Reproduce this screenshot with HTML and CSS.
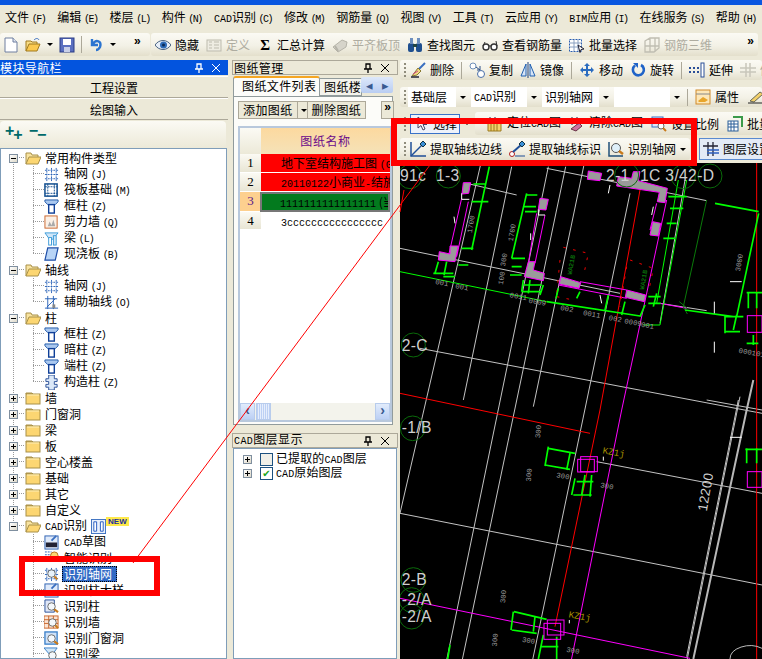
FILE: index.html
```html
<!DOCTYPE html>
<html lang="zh">
<head>
<meta charset="utf-8">
<title>CAD识别</title>
<link rel="stylesheet" href="styles.css">
</head>
<body>
<svg class="defs" aria-hidden="true">
<symbol id="new" viewBox="0 0 16 16"><path d="M2 1h8l4 4v10H2z" fill="#fff" stroke="#6f7f9f"/><path d="M10 1v4h4" fill="#dfe6f2" stroke="#6f7f9f"/></symbol>
<symbol id="open" viewBox="0 0 16 16"><path d="M1 14V4h5l1 1h5v2" fill="#f8dc84" stroke="#a07a20"/><path d="M1 14l3-7h11l-3 7z" fill="#fbc94f" stroke="#a07a20"/><path d="M9 3c2-2 4-2 5 0" fill="none" stroke="#3a6fc0"/></symbol>
<symbol id="save" viewBox="0 0 16 16"><rect x="1" y="1" width="14" height="14" fill="#5a6fc0" stroke="#2b3d85"/><rect x="4" y="2" width="8" height="6" fill="#fff"/><rect x="5" y="10" width="6" height="5" fill="#c8cfe8"/></symbol>
<symbol id="undo" viewBox="0 0 16 16"><path d="M4 2v6h6M5 7c3-5 9-3 7 3-1 2-3 3-4 3" fill="none" stroke="#2b74d0" stroke-width="2.4"/></symbol>
<symbol id="eye" viewBox="0 0 16 16"><path d="M0 8c4-6 12-6 16 0-4 6-12 6-16 0z" fill="#e6eef8" stroke="#47607f"/><circle cx="8.500" cy="8" r="3.500" fill="#2d6bb8"/><circle cx="8.500" cy="8" r="1.500" fill="#0b2a55"/></symbol>
<symbol id="def" viewBox="0 0 16 16"><rect x="1" y="3" width="14" height="11" fill="#eeece2" stroke="#bdbbae"/><path d="M8 5h5M8 8h5M8 11h5M3 5h3M3 8h3M3 11h3" stroke="#bdbbae"/></symbol>
<symbol id="align" viewBox="0 0 16 16"><path d="M1 10l9-7 5 2-1 5-8 5z" fill="#d6d4ca" stroke="#b5b3a8"/><path d="M3 9l3 5" stroke="#b5b3a8" stroke-width="2"/></symbol>
<symbol id="bino" viewBox="0 0 16 16"><rect x="1" y="6" width="6" height="9" rx="2" fill="#1f4f8f"/><rect x="9" y="6" width="6" height="9" rx="2" fill="#1f4f8f"/><rect x="3" y="1" width="3" height="6" fill="#6f90bf"/><rect x="10" y="1" width="3" height="6" fill="#6f90bf"/><rect x="6" y="7" width="4" height="3" fill="#244"/></symbol>
<symbol id="glass" viewBox="0 0 16 16"><circle cx="4" cy="10" r="3" fill="#fff" stroke="#333" stroke-width="1.400"/><circle cx="12" cy="10" r="3" fill="#fff" stroke="#333" stroke-width="1.400"/><path d="M7 9h2M1 9l2-4M15 9l-1-5" stroke="#333"/></symbol>
<symbol id="batch" viewBox="0 0 16 16"><rect x=".5" y="2.500" width="12" height="12" fill="#fff" stroke="#2b5fb0" stroke-dasharray="2 1"/><path d="M1 6h11M1 10h11M5 3v11M9 3v11" stroke="#8aa0c0"/><path d="M9 8l6 4-3 .5-1 3z" fill="#fff" stroke="#223"/></symbol>
<symbol id="rebar" viewBox="0 0 16 16"><path d="M1 4l5-3h9v10l-5 4H1zM1 9h14M6 1v14M11 1v14" fill="none" stroke="#c0beb2" stroke-width="1.300"/></symbol>
<symbol id="brush" viewBox="0 0 16 16"><path d="M15 1L8 8" stroke="#3a6fc0" stroke-width="2"/><path d="M8 6l3 3-4 4-5 1z" fill="#f3d982" stroke="#8a7a30"/><path d="M1 15h8" stroke="#223" stroke-width="1.400"/><path d="M3 12l5-3" stroke="#d04a8a"/></symbol>
<symbol id="copy" viewBox="0 0 16 16"><circle cx="4" cy="4" r="3" fill="#fff" stroke="#6f8fb8"/><circle cx="12" cy="12" r="3.500" fill="#fff" stroke="#4a6fa8"/><path d="M7 5l4 3M11 4v4H8" fill="none" stroke="#2b4f88"/></symbol>
<symbol id="mirror" viewBox="0 0 16 16"><path d="M6 2L1 14h5zM10 2l5 12h-5z" fill="#d6e4f6" stroke="#1f5fb0"/><path d="M8 0v16" stroke="#1f3f78"/></symbol>
<symbol id="move" viewBox="0 0 16 16"><path d="M8 1l3 3H9v3h3V5l3 3-3 3V9H9v3h2l-3 3-3-3h2V9H4v2L1 8l3-3v2h3V4H5z" fill="#2b6cc0"/></symbol>
<symbol id="rotate" viewBox="0 0 16 16"><path d="M11 3a5.500 5.500 0 1 1-6 .5" fill="none" stroke="#1f63c8" stroke-width="2.600"/><path d="M3 1h5v5z" fill="#1f63c8"/></symbol>
<symbol id="extend" viewBox="0 0 16 16"><path d="M0 6h2M4 6h2M8 6h2M0 10h2M4 10h2M8 10h2" stroke="#2b4f98" stroke-width="2"/><rect x="12" y="1" width="3" height="14" fill="#fff" stroke="#2b4f98"/></symbol>
<symbol id="trim" viewBox="0 0 16 16"><path d="M0 6h16M0 10h16M6 1v14M10 1v14" stroke="#c8c6ba" stroke-width="1.500"/></symbol>
<symbol id="prop" viewBox="0 0 16 16"><rect x="1" y="1" width="14" height="14" fill="#fde7b8" stroke="#d08a2a"/><path d="M1 5h14" stroke="#888"/><path d="M3 12l5-4 5 3-3 2H4z" fill="#e8a52a"/></symbol>
<symbol id="pen" viewBox="0 0 16 16"><path d="M2 12L12 3l3 2-9 8z" fill="#f3d06a" stroke="#665"/><path d="M0 14h14" stroke="#222"/></symbol>
<symbol id="cursor" viewBox="0 0 16 16"><path d="M5 1v11l3-2.500 2 4.500 2-1-2-4.500h4z" fill="#fff" stroke="#446"/></symbol>
<symbol id="locate" viewBox="0 0 16 16"><path d="M1 15V7h13v8zM4 7v8M7 7v8M10 7v8" fill="#f3d06a" stroke="#9a7a20"/><path d="M3 1v7M8 1v7" stroke="#224"/></symbol>
<symbol id="clear" viewBox="0 0 16 16"><path d="M3 1v8M8 1v8" stroke="#224"/><path d="M2 13l8-6 3 3-6 5z" fill="#d070a0" stroke="#634"/><path d="M9 8l5-5" stroke="#3a6fc0" stroke-width="2"/></symbol>
<symbol id="scale" viewBox="0 0 16 16"><rect x="1" y="1" width="11" height="10" fill="#dfe9f8" stroke="#3a6fc0"/><rect x="4" y="4" width="5" height="4" fill="#e05a3a"/><circle cx="10" cy="10" r="3" fill="#fff" stroke="#666"/><path d="M12 12l3 3" stroke="#c87a1a" stroke-width="2"/></symbol>
<symbol id="batch2" viewBox="0 0 16 16"><rect x="1" y="5" width="10" height="10" fill="#fff" stroke="#2b5f98"/><path d="M1 8h10M1 11h10M4 5v10M7 5v10" stroke="#2b5f98"/><path d="M6 1h9v10" fill="none" stroke="#3a9a4a" stroke-width="2"/></symbol>
<symbol id="ext1" viewBox="0 0 16 16"><path d="M1 1v14h15" fill="none" stroke="#1f4f98" stroke-width="1.500"/><path d="M1 15L12 4" stroke="#1f4f98" stroke-width="1.500"/><path d="M10 3l3-3 3 3-3 3z" fill="#3a8fd8" stroke="#134"/></symbol>
<symbol id="ext2" viewBox="0 0 16 16"><circle cx="3" cy="13" r="2.500" fill="#fff" stroke="#b02020"/><path d="M4 11l8-7" stroke="#1f4f98" stroke-width="2"/><path d="M10 3l3-3 3 3-3 3z" fill="#3a8fd8" stroke="#134"/><path d="M6 15h10" stroke="#1f4f98"/></symbol>
<symbol id="find" viewBox="0 0 16 16"><path d="M1 1v14h14" fill="none" stroke="#1f4f78" stroke-width="1.500"/><circle cx="8" cy="7" r="4.500" fill="#dff0fa" stroke="#555"/><path d="M11 10l4 3" stroke="#c87a1a" stroke-width="2.400"/></symbol>
<symbol id="layer" viewBox="0 0 16 16"><path d="M5 1v14M10 1v14M0 5h15" stroke="#223" stroke-width="1.300"/><path d="M4 9h12M4 12h12" stroke="#2b5fc0" stroke-width="1.300"/></symbol>
<symbol id="fo" viewBox="0 0 16 16"><path d="M1 14V3h5l1 2h6v2" fill="#f8e3a0" stroke="#a89048"/><path d="M1 14l3-7h12l-3 7z" fill="#fcd672" stroke="#a89048"/></symbol>
<symbol id="fc" viewBox="0 0 16 16"><path d="M1 4V3h6l1 1z" fill="#e8c878" stroke="#a89048"/><rect x="1" y="4" width="14" height="10" fill="#fcd672" stroke="#a89048"/><path d="M2 5h12" stroke="#fdeeb8"/></symbol>
<symbol id="grid" viewBox="0 0 16 16"><path d="M3 1v14M8 1v14M13 1v14M1 3.500h14M1 8h14M1 12.500h14" stroke="#2a62b8" stroke-dasharray="2 1"/></symbol>
<symbol id="raft" viewBox="0 0 16 16"><rect x="1" y="1" width="13" height="13" fill="#fff" stroke="#134f90" stroke-width="1.600"/><path d="M1 4h13M1 11h13M4 1v13M11 1v13" stroke="#134f90" stroke-dasharray="2 1"/></symbol>
<symbol id="col" viewBox="0 0 16 16"><path d="M1 1h14v2l-3 3H4L1 3z" fill="#a9c7ef" stroke="#1f58a8"/><rect x="5" y="6" width="6" height="9" fill="#fff" stroke="#0f3f98" stroke-width="1.500"/></symbol>
<symbol id="wall" viewBox="0 0 16 16"><rect x="1" y="1" width="13" height="13" fill="#fbf0e6" stroke="#c8642a"/><path d="M4 12l2-5 2 4 2-6 2 7z" fill="#aaa"/></symbol>
<symbol id="beam" viewBox="0 0 16 16"><path d="M1 2h14L9 9H6z" fill="#cfe6f8" stroke="#3a9ad8"/><rect x="5" y="7" width="3" height="8" fill="#fff" stroke="#3a9ad8"/><rect x="10" y="5" width="3" height="10" fill="#cfe6f8" stroke="#3a9ad8"/></symbol>
<symbol id="slab" viewBox="0 0 16 16"><path d="M4 1h11l-3 13H1z" fill="#b8d4f6" stroke="#1f4fa8" stroke-width="1.300"/></symbol>
<symbol id="aux" viewBox="0 0 16 16"><path d="M4 1v14M10 1v14M1 14h14M1 4h13" stroke="#2a62b8"/><path d="M3 13L12 4" stroke="#2a62b8"/><rect x="9" y="10" width="3" height="4" fill="#888"/></symbol>
<symbol id="gz" viewBox="0 0 16 16"><path d="M5 0h6v4h3v3h-3v3h3v3h-3v3H5v-3H2v-3h3V7H2V4h3z" fill="#dbe8f8" stroke="#2a4f98"/></symbol>
<symbol id="cad" viewBox="0 0 16 16"><rect x="1" y="1" width="14" height="14" fill="#dfeafa" stroke="#2a5fb0"/><path d="M8 6l5-5" stroke="#3a6fc0" stroke-width="2"/><path d="M2 8h12v5H2z" fill="#223"/></symbol>
<symbol id="smart" viewBox="0 0 16 16"><path d="M1 1h7M1 4h7" stroke="#2a62b8" stroke-dasharray="2 1"/><circle cx="11" cy="5" r="4" fill="#fcd672" stroke="#b8701a"/></symbol>
<symbol id="igrid" viewBox="0 0 16 16"><path d="M3 1v14M8 1v14M13 1v14M1 3.500h14M1 8h14M1 12.500h14" stroke="#2a62b8" stroke-dasharray="2 1"/><circle cx="8" cy="7" r="4" fill="#e8f2fa" stroke="#666"/><path d="M11 10l3 3" stroke="#c87a1a" stroke-width="2.200"/></symbol>
<symbol id="icol" viewBox="0 0 16 16"><path d="M1 1h10v13H1z" fill="#dfe6f6" stroke="#2a4f98"/><circle cx="8" cy="8" r="4" fill="#f4f8fc" stroke="#666"/><path d="M11 11l4 3" stroke="#c87a1a" stroke-width="2.200"/></symbol>
<symbol id="iwall" viewBox="0 0 16 16"><rect x="0" y="1" width="15" height="13" fill="#fbe4d4" stroke="#c8642a"/><path d="M0 5h15M0 9h15M5 1v13M10 1v13" stroke="#c8642a"/><circle cx="9" cy="8" r="4" fill="#f4f8fc" stroke="#666"/><path d="M12 11l3 3" stroke="#c87a1a" stroke-width="2.200"/></symbol>
<symbol id="idoor" viewBox="0 0 16 16"><rect x="1" y="1" width="13" height="13" fill="#cfe2f8" stroke="#3a7fc8" stroke-width="1.400"/><circle cx="8" cy="8" r="4" fill="#f4f8fc" stroke="#666"/><path d="M11 11l4 3" stroke="#c87a1a" stroke-width="2.200"/></symbol>
<symbol id="ibeam" viewBox="0 0 16 16"><path d="M0 1h14L9 8H6z" fill="#cfe6f8" stroke="#3a7fc8"/><circle cx="9" cy="9" r="4" fill="#f4f8fc" stroke="#666"/><path d="M12 12l3 3" stroke="#c87a1a" stroke-width="2.200"/></symbol>
<symbol id="cols" viewBox="0 0 16 16"><rect x=".5" y=".5" width="15" height="15" fill="#e8f0fc" stroke="#3a6fc0"/><path d="M3 3h3v10H3zM10 3h3v10h-3z" fill="#fff" stroke="#1f58c0"/></symbol>
<symbol id="pin" viewBox="0 0 10 10"><path d="M3 1h4v5H3zM1 6h8M5 6v4" fill="none" stroke="currentColor" stroke-width="1.300"/></symbol>
<symbol id="close" viewBox="0 0 10 10"><path d="M1 1l8 8M9 1L1 9" stroke="currentColor"/></symbol>
</svg>

<div class="app">
  <div class="title"></div>
  <nav class="menu">
    <span>文件 <kbd>(F)</kbd></span><span>编辑 <kbd>(E)</kbd></span><span>楼层 <kbd>(L)</kbd></span><span>构件 <kbd>(N)</kbd></span><span><b>CAD</b>识别 <kbd>(C)</kbd></span><span>修改 <kbd>(M)</kbd></span><span>钢筋量 <kbd>(Q)</kbd></span><span>视图 <kbd>(V)</kbd></span><span>工具 <kbd>(T)</kbd></span><span>云应用 <kbd>(Y)</kbd></span><span><b>BIM</b>应用 <kbd>(I)</kbd></span><span>在线服务 <kbd>(S)</kbd></span><span>帮助 <kbd>(H)</kbd></span>
  </nav>

  <div class="topbars">
    <div class="bar std">
      <svg class="ic"><use href="#new"/></svg>
      <svg class="ic"><use href="#open"/></svg><i class="caret"></i>
      <svg class="ic"><use href="#save"/></svg>
      <i class="sep"></i>
      <svg class="ic"><use href="#undo"/></svg><i class="caret"></i>
      <span class="more">»</span>
    </div>
    <div class="bar main-tools">
      <span class="t"><svg class="ic"><use href="#eye"/></svg>隐藏</span>
      <span class="t off"><svg class="ic"><use href="#def"/></svg>定义</span>
      <span class="t sum"><em>Σ</em>汇总计算</span>
      <span class="t off"><svg class="ic"><use href="#align"/></svg>平齐板顶</span>
      <span class="t"><svg class="ic"><use href="#bino"/></svg>查找图元</span>
      <span class="t"><svg class="ic"><use href="#glass"/></svg>查看钢筋量</span>
      <span class="t"><svg class="ic"><use href="#batch"/></svg>批量选择</span>
      <span class="t off"><svg class="ic"><use href="#rebar"/></svg>钢筋三维</span>
      <span class="more end">»</span>
    </div>
  </div>

  <div class="work">
    <aside class="nav">
      <header class="ph active"><span class="ph-t">模块导航栏</span><svg class="pi"><use href="#pin"/></svg><svg class="pi"><use href="#close"/></svg></header>
      <div class="navbtn first">工程设置</div>
      <div class="navbtn">绘图输入</div>
      <div class="navtools"><span class="plus">+<small>+</small></span><span class="minus">−<small>−</small></span></div>
      <div class="tree">
        <div class="r root open top"><i class="x m"></i><svg class="ic"><use href="#fo"/></svg>常用构件类型</div>
        <div class="r k"><svg class="ic"><use href="#grid"/></svg><span>轴网 <kbd>(J)</kbd></span></div>
        <div class="r k"><svg class="ic"><use href="#raft"/></svg><span>筏板基础 <kbd>(M)</kbd></span></div>
        <div class="r k"><svg class="ic"><use href="#col"/></svg><span>框柱 <kbd>(Z)</kbd></span></div>
        <div class="r k"><svg class="ic"><use href="#wall"/></svg><span>剪力墙 <kbd>(Q)</kbd></span></div>
        <div class="r k"><svg class="ic"><use href="#beam"/></svg><span>梁 <kbd>(L)</kbd></span></div>
        <div class="r k last"><svg class="ic"><use href="#slab"/></svg><span>现浇板 <kbd>(B)</kbd></span></div>
        <div class="r root open"><i class="x m"></i><svg class="ic"><use href="#fo"/></svg>轴线</div>
        <div class="r k"><svg class="ic"><use href="#grid"/></svg><span>轴网 <kbd>(J)</kbd></span></div>
        <div class="r k last"><svg class="ic"><use href="#aux"/></svg><span>辅助轴线 <kbd>(O)</kbd></span></div>
        <div class="r root open"><i class="x m"></i><svg class="ic"><use href="#fo"/></svg>柱</div>
        <div class="r k"><svg class="ic"><use href="#col"/></svg><span>框柱 <kbd>(Z)</kbd></span></div>
        <div class="r k"><svg class="ic"><use href="#col"/></svg><span>暗柱 <kbd>(Z)</kbd></span></div>
        <div class="r k"><svg class="ic"><use href="#col"/></svg><span>端柱 <kbd>(Z)</kbd></span></div>
        <div class="r k last"><svg class="ic"><use href="#gz"/></svg><span>构造柱 <kbd>(Z)</kbd></span></div>
        <div class="r root"><i class="x"></i><svg class="ic"><use href="#fc"/></svg>墙</div>
        <div class="r root"><i class="x"></i><svg class="ic"><use href="#fc"/></svg>门窗洞</div>
        <div class="r root"><i class="x"></i><svg class="ic"><use href="#fc"/></svg>梁</div>
        <div class="r root"><i class="x"></i><svg class="ic"><use href="#fc"/></svg>板</div>
        <div class="r root"><i class="x"></i><svg class="ic"><use href="#fc"/></svg>空心楼盖</div>
        <div class="r root"><i class="x"></i><svg class="ic"><use href="#fc"/></svg>基础</div>
        <div class="r root"><i class="x"></i><svg class="ic"><use href="#fc"/></svg>其它</div>
        <div class="r root"><i class="x"></i><svg class="ic"><use href="#fc"/></svg>自定义</div>
        <div class="r root open bottom"><i class="x m"></i><svg class="ic"><use href="#fo"/></svg><span><b>CAD</b>识别</span><svg class="ic badge-ic"><use href="#cols"/></svg><span class="new">NEW</span></div>
        <div class="r k tail"><svg class="ic"><use href="#cad"/></svg><span><b>CAD</b>草图</span></div>
        <div class="r k tail"><svg class="ic"><use href="#smart"/></svg><span>智能识别</span></div>
        <div class="r k tail"><svg class="ic"><use href="#igrid"/></svg><span class="sel">识别轴网</span></div>
        <div class="r k tail"><svg class="ic"><use href="#cad"/></svg><span>识别柱大样</span></div>
        <div class="r k tail"><svg class="ic"><use href="#icol"/></svg><span>识别柱</span></div>
        <div class="r k tail"><svg class="ic"><use href="#iwall"/></svg><span>识别墙</span></div>
        <div class="r k tail"><svg class="ic"><use href="#idoor"/></svg><span>识别门窗洞</span></div>
        <div class="r k tail"><svg class="ic"><use href="#ibeam"/></svg><span>识别梁</span></div>
      </div>
    </aside>

    <section class="mid">
      <header class="ph"><span class="ph-t">图纸管理</span><svg class="pi"><use href="#pin"/></svg><svg class="pi"><use href="#close"/></svg></header>
      <div class="tabs">
        <div class="tab on">图纸文件列表</div>
        <div class="tab">图纸楼层</div>
        <div class="tabnav"><span>◂</span><span>▸</span></div>
      </div>
      <div class="tabbody">
        <div class="btns">
          <span class="btn">添加图纸</span><span class="btn dd"><i class="caret"></i></span><span class="btn">删除图纸</span><span class="btn more-btn">»</span>
        </div>
        <div class="grid">
          <div class="gh corner"></div><div class="gh name">图纸名称</div>
          <div class="rn">1</div><div class="cell red">地下室结构施工图 <b>(G</b></div>
          <div class="rn">2</div><div class="cell red"><b>20110122</b>小商业<b>-</b>结施</div>
          <div class="rn cur">3</div><div class="cell green"><b>1111111111111111</b> (当</div>
          <div class="rn">4</div><div class="cell"><b>3cccccccccccccccc</b></div>
          <div class="gfill"></div>
          <div class="hscroll"><span class="sb">‹</span><span class="thumb"></span><span class="track"></span><span class="sb">›</span></div>
        </div>
      </div>
      <header class="ph layer-h"><span class="ph-t"><b>CAD</b>图层显示</span><svg class="pi"><use href="#pin"/></svg><svg class="pi"><use href="#close"/></svg></header>
      <div class="ltree">
        <div class="lr"><i class="x"></i><i class="chk"></i><span>已提取的<b>CAD</b>图层</span></div>
        <div class="lr"><i class="x"></i><i class="chk on">✔</i><span><b>CAD</b>原始图层</span></div>
      </div>
    </section>

    <section class="right">
      <div class="bar row r1">
        <i class="grip"></i>
        <span class="t"><svg class="ic"><use href="#brush"/></svg>删除</span><i class="sep"></i>
        <span class="t"><svg class="ic"><use href="#copy"/></svg>复制</span>
        <span class="t"><svg class="ic"><use href="#mirror"/></svg>镜像</span><i class="sep"></i>
        <span class="t"><svg class="ic"><use href="#move"/></svg>移动</span>
        <span class="t"><svg class="ic"><use href="#rotate"/></svg>旋转</span><i class="sep"></i>
        <span class="t"><svg class="ic"><use href="#extend"/></svg>延伸</span>
        <span class="t off"><svg class="ic"><use href="#trim"/></svg>修剪</span>
      </div>
      <div class="bar row r2">
        <i class="grip"></i>
        <span class="combo c1"><span>基础层</span><i class="caret"></i></span>
        <span class="combo c2"><span><b>CAD</b>识别</span><i class="caret"></i></span>
        <span class="combo c3"><span>识别轴网</span><i class="caret"></i></span>
        <span class="combo c4"><i class="caret"></i></span>
        <i class="sep"></i>
        <span class="t"><svg class="ic"><use href="#prop"/></svg>属性</span>
        <span class="t"><svg class="ic"><use href="#pen"/></svg></span>
      </div>
      <div class="split r3">
        <div class="bar seg s-a"><i class="grip"></i><span class="pick"><svg class="ic"><use href="#cursor"/></svg>选择</span><i class="caret"></i></div>
        <div class="bar seg s-b">
          <span class="t"><svg class="ic"><use href="#locate"/></svg><span>定位<b>CAD</b>图</span></span>
          <span class="t"><svg class="ic"><use href="#clear"/></svg><span>清除<b>CAD</b>图</span></span>
          <span class="t"><svg class="ic"><use href="#scale"/></svg>设置比例</span>
          <span class="t"><svg class="ic"><use href="#batch2"/></svg>批量替换</span>
        </div>
      </div>
      <div class="split r4">
        <div class="bar seg s-c">
          <i class="grip"></i>
          <span class="t"><svg class="ic"><use href="#ext1"/></svg>提取轴线边线</span>
          <span class="t"><svg class="ic"><use href="#ext2"/></svg>提取轴线标识</span>
          <span class="t"><svg class="ic"><use href="#find"/></svg>识别轴网<i class="caret"></i></span>
        </div>
        <div class="layerbtn"><svg class="ic"><use href="#layer"/></svg>图层设置</div>
      </div>
      <div class="canvas">
        <svg class="cad" viewBox="0 0 362 496">
          <g transform="translate(0 -3) scale(.33333)">
            <g class="gl">
              <path d="M335 20L190 720M245 0L0 1060M555 0L400 740"/>
              <path d="M445 20L0 2180M497 20L40 2200M690 100L160 2640M855 60L780 490M1020 710L600 2800"/>
              <path d="M0 265L660 400M780 430L920 452M440 25L920 122M200 70L350 105M60 565L1086 760M590 905L1086 1000"/>
              <path d="M0 1060L1086 1275M920 720L1086 750M1560 1500L1660 1520"/>
            </g>
            <path class="gth" d="M1060 660L1040 750L880 1497"/>
            <path class="gth2" d="M1015 720L860 1490"/>
            <path class="rl" d="M720 90L600 750L465 1400M1070 0V1500M0 700L570 820"/>
            <path class="ml" d="M800 120L665 750L510 1520M0 1315L870 1495M780 430L860 445M185 115L145 290M205 125L170 290M410 160L385 310M435 165L405 310M770 130L750 210M540 365L680 390M475 375L680 415"/>
            <path class="rd" d="M490 262L565 280L550 350M480 300L470 400M470 410L520 420M690 300L760 325L745 400M680 320L660 440"/>
            <path class="gd" d="M920 120L850 440L862 462M838 425L862 445"/>
            <path class="g2" d="M0 335L440 425M860 60L780 495H730M835 60L770 430"/>
            <path class="g4" d="M268 20L215 270M220 72H255M215 125H265M185 265H220M115 305L105 340M140 305L132 345M100 340H160M130 350H165M205 315H175M380 100L335 295M380 105H412M370 140H408M375 155H410M335 295H375M335 320H365M330 345H365M372 375H425M370 360L365 395M390 360L385 400M430 375L420 405M365 395H425M440 425L720 468M475 385L468 415M540 395L530 415M625 405L615 450M675 425L665 465M735 435L720 470M745 410H782M745 430H782M770 400L760 440M805 110H860M810 145H850M800 190H830M790 235H825M945 130L1076 155M1076 160L1010 470M855 450L1000 470M975 465V520M1010 465L1000 510M975 470H1030M975 515H1020M1045 395V445M1070 395V445M1040 398H1086M1040 550H1075M1060 525V555"/>
            <path class="g4" d="M445 865L525 880M435 915L510 928M445 860L435 918M510 880L500 930M525 955L515 1005M555 945L545 1005M530 965H580M520 1005H575M575 945L570 1010M342 1355L440 1378M335 1410L410 1420M340 1355L333 1410M405 1370L400 1415M430 1425L415 1497M470 1430V1497M425 1460H475M1040 865V910M1070 865V910M1036 868H1086M150 1455L143 1497"/>
            <g class="col">
              <path d="M190 68L212 68L206 100L186 102Z"/><path d="M118 275L150 282L150 258L175 258L165 305L115 300Z"/><path d="M420 115L445 118L438 150L415 148Z"/><path d="M385 305L405 305L400 330L433 340L430 362L373 350Z"/><path d="M482 350L542 368L537 385L478 372Z"/><path d="M680 390L737 405L733 425L676 412Z"/><path d="M565 33L605 40L600 62L562 58Z"/><path d="M655 50L695 55L700 35L720 35L715 62L802 85L795 128L772 125L778 97L650 78Z"/><path d="M758 185L782 190L775 228L750 225Z"/>
            </g>
            <path class="wl" d="M185 100V118H208M415 148V165H435M162 170L165 190M392 220V240M630 75L625 100M760 140L755 165M600 405L605 430M943 425V460M943 545V578M990 365H1025M990 832H1025M610 890V902M508 1380V1390"/>
            <g class="m-box"><rect x="1042" y="467" width="44" height="50"/><rect x="542" y="890" width="50" height="45"/><rect x="533" y="898" width="50" height="38"/><rect x="1042" y="935" width="44" height="47"/><rect x="442" y="1380" width="50" height="45"/><rect x="432" y="1390" width="50" height="48"/></g>
            <g class="ring"><circle cx="30" cy="50" r="36"/><circle cx="145" cy="48" r="36"/><circle cx="680" cy="45" r="36"/><circle cx="850" cy="50" r="36"/><circle cx="930" cy="48" r="36"/><circle cx="40" cy="555" r="36"/><circle cx="38" cy="805" r="37"/><circle cx="40" cy="1260" r="37"/><circle cx="35" cy="1320" r="37"/><circle cx="35" cy="1370" r="37"/></g>
            <g class="big">
              <text x="0" y="62">91c</text><text x="108" y="62">1-3</text><text x="618" y="64">2-1</text><text x="720" y="64">1C 3/42-D</text><text x="5" y="572">2-C</text><text x="5" y="820">-1/B</text><text x="5" y="1275">2-B</text><text x="5" y="1335">-2/A</text><text x="5" y="1385">-2/A</text>
              <text class="rot" transform="translate(920 1055) rotate(-80)">12200</text>
            </g>
            <g class="sm">
              <text transform="translate(215 220) rotate(-80)">1700</text><text transform="translate(338 245) rotate(-80)">1700</text><text transform="translate(315 320) rotate(-80)">300</text><text transform="translate(308 375) rotate(-80)">100</text><text transform="translate(105 372) rotate(10)">001</text><text transform="translate(165 385) rotate(10)">001</text><text transform="translate(328 412) rotate(10)">0011</text><text transform="translate(385 428) rotate(10)">0009</text><text transform="translate(480 450) rotate(10)">002</text><text transform="translate(548 465) rotate(10)">0011</text><text transform="translate(625 480) rotate(10)">002</text><text transform="translate(672 490) rotate(10)">0009</text><text transform="translate(722 500) rotate(10)">001</text><text transform="translate(1015 578) rotate(10)">0001012</text><text transform="translate(1020 335) rotate(-80)">3000</text><text transform="translate(420 835) rotate(-85)">300</text><text transform="translate(392 965) rotate(-85)">300</text><text transform="translate(315 1330) rotate(-85)">300</text><text transform="translate(290 1460) rotate(-85)">300</text><text transform="translate(468 952) rotate(10)">300</text><text transform="translate(600 982) rotate(10)">300</text><text transform="translate(365 1445) rotate(10)">300</text><text transform="translate(498 1475) rotate(10)">300</text>
            </g>
            <g class="tag"><text transform="translate(515 345) rotate(-80)">WA21B</text><text transform="translate(732 390) rotate(-80)">WA21B</text></g>
            <g class="yel"><text transform="translate(607 880) rotate(10)">KZ1j</text><text transform="translate(505 1372) rotate(10)">KZ1j</text></g>
            <path class="arc" d="M990 1497A60 40 0 0 1 1086 1465"/>
          </g>
        </svg>
      </div>
    </section>
  </div>
</div>

<svg class="marks" viewBox="0 0 762 659" aria-hidden="true">
  <path class="mline" d="M133 563L430 165M400 212L404 190"/>
  <rect class="mbox" x="394" y="121" width="300" height="42"/>
  <rect class="mbox" x="22" y="559" width="135" height="34"/>
</svg>
</body>
</html>
```

FILE: styles.css
```css
* { box-sizing: border-box; }
html, body { margin: 0; padding: 0; }
body {
  position: relative;
  width: 762px;
  height: 659px;
  overflow: hidden;
  background: #ece9d8;
  color: #000;
  font: 12px/16px "Noto Sans CJK SC", "Liberation Sans", sans-serif;
}
b { font: 10px/16px "Liberation Mono", monospace; }
kbd { font: 10px/16px "Liberation Mono", monospace; letter-spacing: -1px; }
.menu kbd { letter-spacing: -1.5px; }
i, em { font-style: normal; }
.defs { position: absolute; width: 0; height: 0; }
.app { display: flex; flex-direction: column; height: 659px; }
.ic { width: 16px; height: 16px; flex: none; }

.title { height: 5px; background: #0a57e0; flex: none; }
.menu { height: 28px; flex: none; display: flex; align-items: center; gap: 12px; padding: 0 0 1px 5px; white-space: nowrap; overflow: hidden; }

.bar {
  display: flex;
  align-items: center;
  border-radius: 3px;
  background: linear-gradient(#fbfaf4, #f3f1e6 55%, #e3dfcc);
  white-space: nowrap;
  overflow: hidden;
}
.topbars { height: 27px; flex: none; display: flex; gap: 1px; }
.topbars .bar { height: 23px; }
.std { width: 150px; padding-left: 3px; gap: 6px; flex: none; }
.main-tools { flex: 1; padding-left: 4px; gap: 7px; margin-right: 4px; }
.t { display: inline-flex; align-items: center; gap: 4px; flex: none; }
.off { color: #aeaca0; }
.sum em { width: 16px; text-align: center; font: bold 15px/16px "Liberation Serif", serif; }
.more { font: bold 12px/10px "Liberation Sans", sans-serif; align-self: flex-start; margin: 3px 0 0 12px; }
.end { margin-left: 28px; }
.caret { display: inline-block; width: 0; height: 0; border: 3px solid transparent; border-top: 3px solid #000; border-bottom: 0; flex: none; }
.sep { width: 1px; height: 17px; background: #aca899; flex: none; }
.grip { width: 2px; height: 14px; margin: 0 -3px 0 4px; background: repeating-linear-gradient(#8f8c7c 0 2px, transparent 2px 4px); flex: none; }

.work { flex: 1; display: flex; min-height: 0; }
.nav { width: 228px; flex: none; display: flex; flex-direction: column; }
.ph { height: 15px; flex: none; display: flex; align-items: center; overflow: hidden; }
.ph-t { flex: 1; letter-spacing: .4px; white-space: nowrap; font-size: 12px; }
.ph.active { background: #0354de; color: #fff; width: 228px; }
.pi { width: 10px; height: 10px; margin-right: 7px; flex: none; }
.navbtn { height: 22px; flex: none; text-align: center; line-height: 21px; border-top: 1px solid #fff; border-bottom: 1px solid #aca899; }
.navbtn.first { margin-top: 1px; }
.navtools { height: 27px; flex: none; margin: 1px 2px 0 0; display: flex; gap: 7px; padding: 2px 0 0 5px; border-radius: 4px 4px 0 0; background: linear-gradient(#fbfaf4, #ece9d8); color: #006a6a; font: bold 16px/16px "Liberation Sans", sans-serif; }
.navtools small { font-size: 16px; position: relative; top: 4px; }
.plus, .minus { letter-spacing: -1px; }

.tree { flex: 1; margin-right: 1px; padding-top: 1px; background: #fff; border: 1px solid #7f9db9; overflow: hidden; }
.r { height: 16px; display: flex; align-items: center; white-space: nowrap; background-repeat: no-repeat; }
.root {
  padding-left: 8px;
  background-image:
    repeating-linear-gradient(#999 0 1px, transparent 1px 2px),
    repeating-linear-gradient(90deg, #999 0 1px, transparent 1px 2px);
  background-position: 12px 0, 12px 7px;
  background-size: 1px 100%, 12px 1px;
}
.root.top { background-position: 12px 8px, 12px 7px; }
.root.bottom { background-size: 1px 8px, 12px 1px; }
.root .x { margin-right: 7px; }
.root > .ic { margin-right: 4px; }
.root > .badge-ic { margin: 0 0 0 4px; }
.x { position: relative; width: 9px; height: 9px; flex: none; border: 1px solid #7f8f9f; background: linear-gradient(135deg, #fff, #ddd8c8); }
.x::before { content: ""; position: absolute; left: 1px; right: 1px; top: 3px; height: 1px; background: #000; }
.x::after { content: ""; position: absolute; top: 1px; bottom: 1px; left: 3px; width: 1px; background: #000; }
.x.m::after { display: none; }
.k {
  padding-left: 43px;
  gap: 5px;
  background-image:
    repeating-linear-gradient(#999 0 1px, transparent 1px 2px),
    repeating-linear-gradient(#999 0 1px, transparent 1px 2px),
    repeating-linear-gradient(90deg, #999 0 1px, transparent 1px 2px);
  background-position: 12px 0, 32px 0, 32px 7px;
  background-size: 1px 100%, 1px 100%, 11px 1px;
}
.k.last { background-size: 1px 100%, 1px 8px, 11px 1px; }
.k.tail { background-image: none, repeating-linear-gradient(#999 0 1px, transparent 1px 2px), repeating-linear-gradient(90deg, #999 0 1px, transparent 1px 2px); }
.k .ic { width: 15px; height: 15px; }
.sel { background: #316ac5; color: #fff; outline: 1px dotted #000; outline-offset: -1px; padding: 0 5px 0 2px; margin-left: -2px; }
.badge-ic { width: 15px; height: 15px; }
.new { background: #ffe94a; color: #1a2fa0; font: bold 8px/9px "Liberation Sans", sans-serif; padding: 0 2px; align-self: flex-start; margin-top: -1px; }

.mid { width: 166px; margin-left: 4px; flex: none; display: flex; flex-direction: column; }
.mid > .ph { border: 1px solid #aca899; padding-left: 1px; }
.tabs { height: 20px; margin: 1px 0 0 1px; flex: none; display: flex; align-items: flex-end; overflow: hidden; }
.tab { width: 42px; height: 18px; flex: none; overflow: hidden; white-space: nowrap; padding-left: 4px; border: 1px solid #919b9c; border-left: 0; background: #f4f3ec; letter-spacing: .4px; }
.tab.on { width: 87px; height: 20px; background: #fcfcf9; padding-left: 8px; border: 1px solid #919b9c; border-top: 2px solid #f5a623; border-bottom: 0; border-radius: 3px 3px 0 0; }
.tabnav { width: 32px; height: 16px; align-self: flex-start; margin: 1px 0 0 -1px; display: flex; justify-content: space-around; background: linear-gradient(#dde8fa, #b9cdf2); color: #3a5a90; border-radius: 2px; font-size: 13px; }
.tabbody { width: 160px; height: 329px; margin-left: 1px; flex: none; background: #fcfcf9; border: 1px solid #919b9c; padding: 4px 0 0 4px; }
.btns { display: flex; height: 18px; }
.btn { background: #ece9d8; border: 1px solid #aca899; padding: 0 4px; letter-spacing: .4px; line-height: 15px; white-space: nowrap; }
.dd { width: 13px; padding: 5px 0 0 3px; border-left: 0; border-right: 0; line-height: 0; }
.more-btn { margin-left: 15px; padding: 0 2px; font: bold 12px/10px "Liberation Sans", sans-serif; }
.grid { width: 154px; height: 296px; margin: 7px 0 0 0; border: 2px solid #b8c8dc; background: #fff; display: grid; grid-template-columns: 21px 1fr; grid-template-rows: 26px 19px 19px 20px 18px 1fr 17px; overflow: hidden; }
.gh { background: linear-gradient(#fbfaf4, #ece9d8); }
.gh.name { background: linear-gradient(#fcd99f, #f5e2b8); color: #6a0a8a; text-align: center; line-height: 25px; font-size: 12px; letter-spacing: .6px; }
.rn { background: linear-gradient(#fbfaf4, #e8e5d4); text-align: center; font-family: "Liberation Serif", serif; font-size: 13px; line-height: 18px; border-bottom: 1px solid #fff; }
.rn.cur { background: #fdd08f; color: #5a1a8a; }
.cell { padding-left: 20px; white-space: nowrap; overflow: hidden; line-height: 18px; border-bottom: 1px solid #fff; }
.cell b { font-size: 10px; line-height: 18px; }
.red { background: #f00; }
.green { background: #037a1e; border: 2px solid #777; padding-left: 18px; margin-left: -1px; line-height: 15px; }
.gfill { grid-column: 1 / -1; background: #fff; }
.hscroll { grid-column: 1 / -1; display: flex; background: #f3f3ec; gap: 1px; }
.sb { width: 15px; background: linear-gradient(#e2ecfc, #bcd0f4); color: #3a5a90; border: 1px solid #b8ccec; text-align: center; font: bold 14px/13px "Liberation Sans", sans-serif; }
.thumb { width: 15px; background: repeating-linear-gradient(90deg, #bcd0f4 0 1px, #e6eefc 1px 2px); border: 1px solid #b8ccec; }
.track { flex: 1; }
.layer-h { margin-top: 8px; }
.ltree { flex: 1; background: #fff; border: 1px solid #7f9db9; padding: 3px 0 0 9px; margin: 0 1px; }
.lr { display: flex; align-items: center; height: 14px; white-space: nowrap; letter-spacing: .1px; }
.lr .x { margin: 0 8px 0 0; }
.chk { width: 13px; height: 13px; flex: none; margin-right: 3px; border: 1px solid #1c5180; background: #f0efe8; color: #1aa51a; text-align: center; font: bold 10px/11px "DejaVu Sans", sans-serif; }
.chk.on { background: #fff; }

.right { width: 362px; margin-left: 2px; flex: none; display: flex; flex-direction: column; overflow: hidden; }
.row { height: 20px; flex: none; gap: 7px; }
.r2 { margin-top: 7px; gap: 1px; }
.r2 .grip { margin-right: 0; }
.r2 .sep { margin: 0 6px 0 2px; }
.r2 .t { margin-right: 8px; }
.combo { height: 20px; display: inline-flex; align-items: center; background: linear-gradient(90deg, #fff calc(100% - 14px), transparent 0); flex: none; padding: 0 4px 0 3px; white-space: nowrap; }
.combo .caret { margin-left: auto; }
.c1 { width: 62px; margin-left: 1px; }
.c2 { width: 70px; }
.c3 { width: 71px; }
.c4 { width: 70px; }
.split { display: flex; flex: none; overflow: hidden; }
.r3 { height: 23px; margin-top: 5px; gap: 5px; }
.r4 { height: 22px; margin-top: 3px; gap: 9px; }
.seg { flex: none; }
.s-a { width: 70px; background: none; gap: 2px; }
.s-a .grip { margin-right: 2px; }
.pick { width: 51px; height: 20px; margin-right: 2px; display: inline-flex; align-items: center; gap: 4px; padding-left: 2px; border: 1px solid #3a72c8; background: #eef2fa; }
.s-b { flex: 1; padding-left: 12px; gap: 8px; margin-right: -40px; }
.s-c { width: 290px; gap: 7px; }
.layerbtn { flex: 1; display: flex; align-items: center; gap: 4px; padding-left: 3px; white-space: nowrap; overflow: hidden; background: #e4ebf6; border: 1px solid #5a8ad0; margin-right: -10px; }
.canvas { flex: 1; margin-top: 3px; background: #000; overflow: hidden; min-height: 0; }
.cad { display: block; width: 362px; height: 496px; }

.gl path { fill: none; stroke: #c4c4c4; stroke-width: 3; }
.gth { fill: none; stroke: #b8b8b8; stroke-width: 6; }
.gth2 { fill: none; stroke: #c4c4c4; stroke-width: 3; }
.rl { fill: none; stroke: #f00; stroke-width: 3; }
.ml { fill: none; stroke: #f0f; stroke-width: 3; }
.rd { fill: none; stroke: #e00; stroke-width: 3; stroke-dasharray: 8 22; }
.gd { fill: none; stroke: #0a7a0a; stroke-width: 3; }
.g2 { fill: none; stroke: #0f0; stroke-width: 3; }
.g4 { fill: none; stroke: #0f0; stroke-width: 5; }
.col path { fill: #9a9a9a; stroke: #f0f; stroke-width: 3; }
.wl { fill: none; stroke: #fff; stroke-width: 3; }
.m-box rect { fill: none; stroke: #f0f; stroke-width: 3; }
.ring circle { fill: none; stroke: #0a6a0a; stroke-width: 3; }
.big text { fill: #cfcfcf; font: 47px "Liberation Sans", sans-serif; letter-spacing: 1px; }
.big .rot { font-size: 40px; }
.sm text { fill: #999; font: 22px "Liberation Mono", monospace; }
.tag text { fill: #0a6a0a; font: bold 20px "Liberation Mono", monospace; }
.yel text { fill: #a89000; font: 28px "Liberation Mono", monospace; }
.arc { fill: none; stroke: #bbb; stroke-width: 3; }

.marks { position: absolute; left: 0; top: 0; width: 762px; height: 659px; pointer-events: none; }
.mline { fill: none; stroke: #f00; stroke-width: 1; }
.mbox { fill: none; stroke: #f00; stroke-width: 6; }
```
